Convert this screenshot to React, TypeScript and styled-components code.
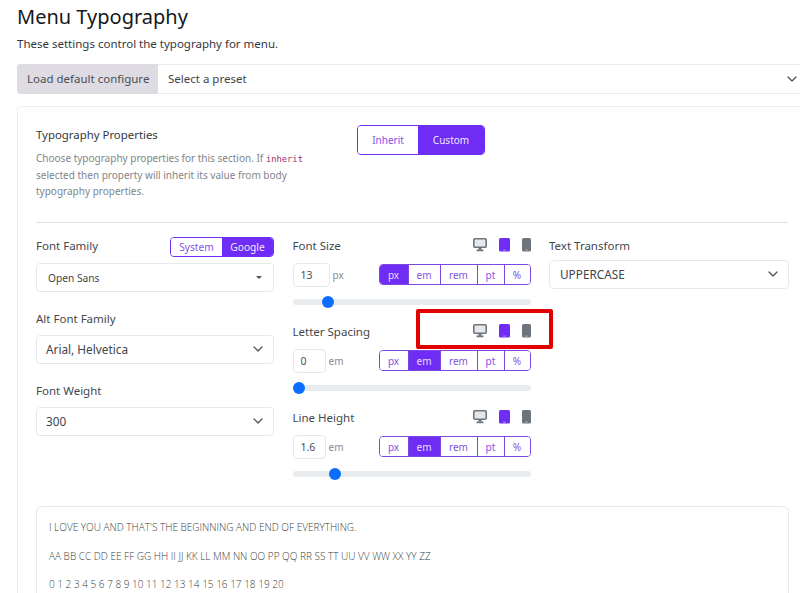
import React from "react";
import styled, { createGlobalStyle } from "styled-components";

const Global = createGlobalStyle`
  html, body { margin: 0; padding: 0; background: #fff; overflow: hidden; }
  body { font-family: "Noto Sans", "Open Sans", sans-serif; color: #3c4146; }
  * { box-sizing: border-box; }
`;

const Page = styled.div`
  width: 808px;
  height: 593px;
  padding: 0 0 0 17px;
  overflow: hidden;
  position: relative;
`;
const Title = styled.h1`
  margin: 0;
  height: 33px;
  font-size: 20px;
  line-height: 33px;
  font-weight: 400;
  color: #16181b;
`;
const Subtitle = styled.p`
  margin: 2px 0 0;
  height: 18px;
  font-size: 11.5px;
  line-height: 18px;
  color: #33383d;
`;
const PresetGroup = styled.div`
  margin-top: 11px;
  height: 30px;
  display: flex;
  border: 1px solid #e9ecef;
  border-left: 0;
  border-radius: 4px;
  font-size: 11.5px;
`;
const PresetLabel = styled.div`
  width: 141px;
  margin: -1px 0;
  padding: 0 0 1px 10px;
  display: flex;
  align-items: center;
  background: #dedbe2;
  border-radius: 4px 0 0 4px;
  color: #495057;
`;
const PresetValue = styled.div`
  flex: 1;
  display: flex;
  align-items: center;
  justify-content: space-between;
  padding: 0 10px 1px;
  color: #3f444a;
`;
const Card = styled.div`
  margin-top: 12px;
  padding: 18px 19px 0 18px;
  height: 520px;
  border: 1px solid #eceef0;
  border-radius: 4px;
`;
const Intro = styled.div`
  display: flex;
  height: 98px;
  border-bottom: 1px solid #dfe2e5;
`;
const IntroText = styled.div`
  width: 321px;
`;
const IntroTitle = styled.div`
  font-size: 11.4px;
  line-height: 20px;
  color: #33383d;
`;
const IntroDescription = styled.p`
  margin: 5px 0 0;
  width: 280px;
  font-size: 10px;
  line-height: 16px;
  color: #7f858a;
  code {
    font-family: "DejaVu Sans Mono", monospace;
    font-size: 8.8px;
    color: #a62d74;
  }
`;
const ToggleGroup = styled.div<{ $small?: boolean }>`
  display: flex;
  height: ${(p) => (p.$small ? "20px" : "30px")};
  font-size: ${(p) => (p.$small ? "10.2px" : "10px")};
  border: 1px solid #6f2cf5;
  border-radius: 4px;
  overflow: hidden;
`;
const ToggleButton = styled.div<{ $active?: boolean; $w: number }>`
  width: ${(p) => p.$w}px;
  display: flex;
  align-items: center;
  justify-content: center;
  background: ${(p) => (p.$active ? "#6f2cf5" : "#fff")};
  color: ${(p) => (p.$active ? "#efe8ff" : "#8552e4")};
`;
const Columns = styled.div`
  display: grid;
  grid-template-columns: 238px 238px 240px;
  column-gap: 18.5px;
  margin-top: 14px;
`;
const Column = styled.div`
  display: flex;
  flex-direction: column;
`;
const FieldHead = styled.div`
  display: flex;
  align-items: center;
  justify-content: space-between;
  height: 20px;
  font-size: 11.5px;
  color: #43484d;
`;
const FieldLabel = styled.span`
  margin-bottom: 3px;
`;
const SelectBox = styled.div<{ $pad?: number; $sm?: boolean; $top?: number }>`
  display: flex;
  align-items: center;
  justify-content: space-between;
  height: 29px;
  margin-top: ${(p) => p.$top ?? 5}px;
  padding: 0 10px ${(p) => (p.$sm ? 0 : 1)}px ${(p) => p.$pad ?? 9}px;
  border: 1px solid #e6e8ea;
  border-radius: 4px;
  font-size: ${(p) => (p.$sm ? "10.2px" : "11.8px")};
  color: #3f444a;
`;
const Caret = styled.span`
  width: 0;
  height: 0;
  margin-right: 1px;
  border-left: 3px solid transparent;
  border-right: 3px solid transparent;
  border-top: 3.5px solid #555;
`;
const AltField = styled.div`
  margin-top: 18px;
`;
const Devices = styled.div`
  display: flex;
  align-items: flex-start;
  gap: 12px;
  height: 14px;
  margin-bottom: 5px;
`;
const UnitRow = styled.div`
  display: flex;
  align-items: center;
  height: 24px;
  margin-top: 6px;
`;
const NumberBox = styled.div<{ $w: number }>`
  width: ${(p) => p.$w}px;
  height: 24px;
  padding-left: 7px;
  display: flex;
  align-items: center;
  border: 1px solid #e6e8ea;
  border-radius: 4px;
  font-size: 10.5px;
  color: #4a4f54;
`;
const UnitLabel = styled.span<{ $w: number }>`
  width: ${(p) => p.$w}px;
  padding-left: 3px;
  font-size: 10px;
  color: #868c92;
`;
const Units = styled.div`
  display: flex;
  height: 21px;
  margin-top: -1px;
  font-size: 10px;
  border: 1px solid #7c46e2;
  border-radius: 4px;
  overflow: hidden;
`;
const Unit = styled.div<{ $active?: boolean; $w: number }>`
  width: ${(p) => p.$w}px;
  display: flex;
  align-items: center;
  justify-content: center;
  background: ${(p) => (p.$active ? "#6f2cf5" : "#fff")};
  color: ${(p) => (p.$active ? "#e8dcff" : "#8552e4")};
  & + & { border-left: 1px solid #7c46e2; }
`;
const Slider = styled.div`
  position: relative;
  height: 6px;
  margin-top: 12px;
  margin-bottom: 18px;
  background: #e9ecef;
  border-radius: 3px;
`;
const Thumb = styled.span`
  position: absolute;
  top: -3px;
  width: 12px;
  height: 12px;
  margin-left: -6px;
  border-radius: 50%;
  background: #0d6efd;
`;
const Preview = styled.div`
  margin-top: 11px;
  width: 753px;
  height: 140px;
  padding: 12px 12px;
  border: 1px solid #e6e8ea;
  border-radius: 6px;
  font-family: "Open Sans", sans-serif;
  font-weight: 300;
  font-size: 10px;
  color: #3a3f44;
  p { margin: 0 0 12.5px; line-height: 16px; }
`;
const Highlight = styled.div`
  position: absolute;
  left: 416px;
  top: 309px;
  width: 137px;
  height: 40px;
  border: 4px solid #e30000;
  border-radius: 2px;
`;

const Chevron = () => (
  <svg width="10" height="6" viewBox="0 0 10 6" fill="none" stroke="#4a4f54" strokeWidth="1.2" strokeLinecap="round" strokeLinejoin="round">
    <path d="M1 1 5 5 9 1" />
  </svg>
);

const DeviceIcons = () => (
  <Devices>
    <svg width="14" height="14" viewBox="0 0 14 14">
      <rect x="0.8" y="0.8" width="12.4" height="8.4" rx="1" fill="#e6e8ea" stroke="#6c757d" strokeWidth="1.6" />
      <rect x="5.5" y="9.8" width="3" height="2" fill="#6c757d" />
      <rect x="3.5" y="11.6" width="7" height="1.6" rx="0.5" fill="#6c757d" />
    </svg>
    <svg width="11" height="14" viewBox="0 0 11 14">
      <rect x="0" y="0" width="11" height="13.5" rx="1.5" fill="#6f2cf5" />
      <rect x="4.2" y="11.6" width="2.6" height="0.9" fill="#b9a0f5" />
    </svg>
    <svg width="9" height="14" viewBox="0 0 9 14">
      <rect x="0" y="0" width="9" height="13.5" rx="1.5" fill="#6c757d" />
      <rect x="3.4" y="11.6" width="2.2" height="0.9" fill="#c4c8cc" />
    </svg>
  </Devices>
);

const UNITS: [string, number][] = [["px", 28], ["em", 32], ["rem", 37], ["pt", 27], ["%", 26]];

const SizeField = ({ label, value, unit, inputWidth, labelWidth, thumb }: { label: string; value: string; unit: string; inputWidth: number; labelWidth: number; thumb: number }) => (
  <>
    <FieldHead>
      <FieldLabel>{label}</FieldLabel>
      <DeviceIcons />
    </FieldHead>
    <UnitRow>
      <NumberBox $w={inputWidth}>{value}</NumberBox>
      <UnitLabel $w={labelWidth}>{unit}</UnitLabel>
      <Units>
        {UNITS.map(([u, w]) => (
          <Unit key={u} $w={w} $active={u === unit}>{u}</Unit>
        ))}
      </Units>
    </UnitRow>
    <Slider>
      <Thumb style={{ left: thumb }} />
    </Slider>
  </>
);

export default function App() {
  return (
    <Page>
      <Global />
      <Title>Menu Typography</Title>
      <Subtitle>These settings control the typography for menu.</Subtitle>
      <PresetGroup>
        <PresetLabel>Load default configure</PresetLabel>
        <PresetValue>
          Select a preset
          <Chevron />
        </PresetValue>
      </PresetGroup>
      <Card>
        <Intro>
          <IntroText>
            <IntroTitle>Typography Properties</IntroTitle>
            <IntroDescription>
              Choose typography properties for this section. If <code>inherit</code> selected then property will inherit its value from body typography properties.
            </IntroDescription>
          </IntroText>
          <ToggleGroup>
            <ToggleButton $w={60}>Inherit</ToggleButton>
            <ToggleButton $w={66} $active>Custom</ToggleButton>
          </ToggleGroup>
        </Intro>
        <Columns>
          <Column>
            <FieldHead>
              <FieldLabel>Font Family</FieldLabel>
              <ToggleGroup $small>
                <ToggleButton $w={51}>System</ToggleButton>
                <ToggleButton $w={51} $active>Google</ToggleButton>
              </ToggleGroup>
            </FieldHead>
            <SelectBox $pad={11} $sm $top={6}>
              Open Sans
              <Caret />
            </SelectBox>
            <AltField>
              <FieldHead><FieldLabel>Alt Font Family</FieldLabel></FieldHead>
              <SelectBox>
                Arial, Helvetica
                <Chevron />
              </SelectBox>
            </AltField>
            <AltField>
              <FieldHead><FieldLabel>Font Weight</FieldLabel></FieldHead>
              <SelectBox>
                300
                <Chevron />
              </SelectBox>
            </AltField>
          </Column>
          <Column>
            <SizeField label="Font Size" value="13" unit="px" inputWidth={37} labelWidth={49} thumb={35} />
            <SizeField label="Letter Spacing" value="0" unit="em" inputWidth={33} labelWidth={53} thumb={6} />
            <SizeField label="Line Height" value="1.6" unit="em" inputWidth={33} labelWidth={53} thumb={42} />
          </Column>
          <Column>
            <FieldHead><FieldLabel>Text Transform</FieldLabel></FieldHead>
            <SelectBox $top={3} $pad={10}>
              UPPERCASE
              <Chevron />
            </SelectBox>
          </Column>
        </Columns>
        <Preview>
          <p>I LOVE YOU AND THAT'S THE BEGINNING AND END OF EVERYTHING.</p>
          <p>AA BB CC DD EE FF GG HH II JJ KK LL MM NN OO PP QQ RR SS TT UU VV WW XX YY ZZ</p>
          <p>0 1 2 3 4 5 6 7 8 9 10 11 12 13 14 15 16 17 18 19 20</p>
        </Preview>
      </Card>
      <Highlight />
    </Page>
  );
}
